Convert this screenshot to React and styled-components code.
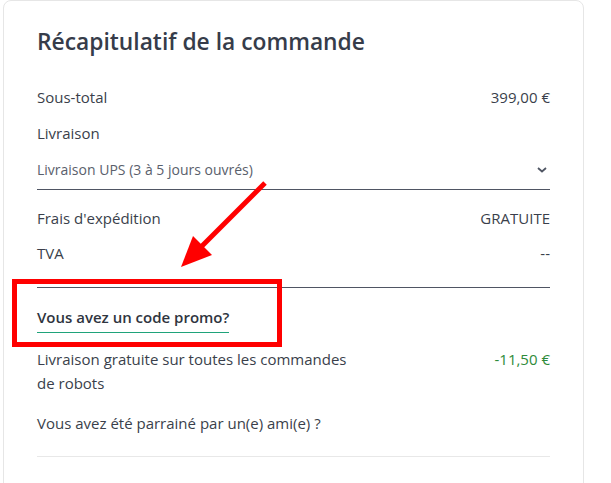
import React from "react";
import styled, { createGlobalStyle } from "styled-components";

const Global = createGlobalStyle`
  html, body { margin: 0; padding: 0; background: #fff; }
  body { font-family: "Open Sans", "Noto Sans", sans-serif; color: #333a45; }
  * { box-sizing: border-box; }
`;

const Page = styled.div`
  position: relative;
  width: 611px;
  height: 483px;
  overflow: hidden;
  padding: 0 27px 0 3px;
`;

const Card = styled.section`
  border: 1px solid #e6e6e6;
  border-radius: 8px;
  padding: 26px 33px 40px 33px;
  min-height: 520px;
`;

const Title = styled.h2`
  margin: 0 0 28px 0;
  font-size: 22.8px;
  font-weight: 600;
  color: #363c4a;
  line-height: 30px;
`;

const Row = styled.div`
  display: flex;
  justify-content: space-between;
  align-items: flex-start;
  font-size: 15px;
  line-height: 24px;
  color: #3a3f4b;
  margin-bottom: ${(p) => p.$mb ?? 12}px;
`;

const Value = styled.span`
  color: ${(p) => p.$color || "#3a3f4b"};
  white-space: nowrap;
`;

const Select = styled.div`
  display: flex;
  justify-content: space-between;
  align-items: center;
  line-height: 22px;
  font-size: 14px;
  color: #5a606c;
  border-bottom: 1.5px solid #4f5563;
  padding: 0 2px 8px 0;
  margin-bottom: 16px;
`;

const Divider = styled.hr`
  border: 0;
  border-top: 1px solid ${(p) => p.$color || "#4f5563"};
  margin: 0;
`;

const PromoLink = styled.a`
  display: inline-block;
  font-size: 15px;
  font-weight: 600;
  color: #2f3540;
  text-decoration: none;
  border-bottom: 1.5px solid #1fa37a;
  line-height: 22px;
  padding-bottom: 4px;
  margin: 18px 0 14px 0;
`;

const Label = styled.span`
  max-width: 318px;
`;

const Overlay = styled.svg`
  position: absolute;
  left: 0;
  top: 0;
  pointer-events: none;
`;

export default function App() {
  return (
    <>
      <Global />
      <Page>
        <Card>
          <Title>Récapitulatif de la commande</Title>
          <Row $mb={12}>
            <span>Sous-total</span>
            <Value>399,00 €</Value>
          </Row>
          <Row $mb={14}>
            <span>Livraison</span>
          </Row>
          <Select>
            <span>Livraison UPS (3 à 5 jours ouvrés)</span>
            <svg width="12" height="8" viewBox="0 0 12 8">
              <path d="M2 2 L6 5.5 L10 2" fill="none" stroke="#4f5563" strokeWidth="1.8" />
            </svg>
          </Select>
          <Row $mb={11}>
            <span>Frais d'expédition</span>
            <Value>GRATUITE</Value>
          </Row>
          <Row $mb={22}>
            <span>TVA</span>
            <Value>--</Value>
          </Row>
          <Divider />
          <PromoLink href="#">Vous avez un code promo?</PromoLink>
          <Row $mb={16}>
            <Label>Livraison gratuite sur toutes les commandes de robots</Label>
            <Value $color="#2e8b3a">-11,50 €</Value>
          </Row>
          <Row $mb={21}>
            <span>Vous avez été parrainé par un(e) ami(e) ?</span>
          </Row>
          <Divider $color="#e8e8e8" />
        </Card>
        <Overlay width="611" height="483" viewBox="0 0 611 483">
          <rect x="14.5" y="281.5" width="265" height="63" fill="none" stroke="#ff0000" strokeWidth="5" />
          <line x1="265" y1="183" x2="200" y2="248" stroke="#ff0000" strokeWidth="5" />
          <polygon points="181,267 193,236 212,255" fill="#ff0000" />
        </Overlay>
      </Page>
    </>
  );
}
